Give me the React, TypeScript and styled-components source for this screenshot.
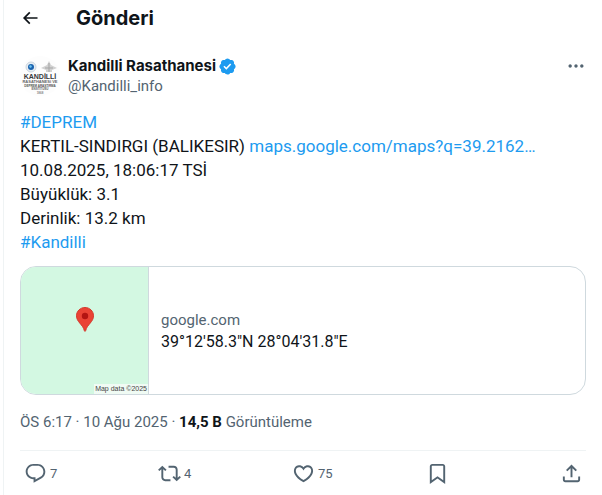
import React from "react";
import styled, { createGlobalStyle } from "styled-components";

const colors = {
  text: "#0f1419",
  muted: "#536471",
  link: "#1d9bf0",
  border: "#cfd9de",
  line: "#eff3f4",
  map: "#d3f8e2",
};

const GlobalStyle = createGlobalStyle`
  *, *::before, *::after { box-sizing: border-box; }
  body {
    margin: 0;
    background: #fff;
    color: ${colors.text};
    font-family: Roboto, "Liberation Sans", sans-serif;
    font-size: 15px;
    line-height: 20px;
  }
  button {
    padding: 0;
    border: 0;
    background: none;
    color: inherit;
    font: inherit;
    cursor: pointer;
  }
  a { color: ${colors.link}; text-decoration: none; }
  svg { display: block; flex: none; fill: currentColor; }
`;

const Column = styled.main`
  min-height: 100vh;
  margin-left: 3px;
  padding: 0 16px;
  border-left: 1px solid ${colors.line};
`;

const Header = styled.header`
  display: flex;
  align-items: center;
  gap: 36px;
  height: 36px;
`;

const Title = styled.h1`
  margin: 0;
  font-family: Inter, sans-serif;
  font-size: 20px;
  font-weight: 700;
  line-height: 24px;
`;

const IconButton = styled.button`
  display: flex;
  color: ${colors.text};
`;

const MoreButton = styled(IconButton)`
  align-self: flex-start;
  margin-left: auto;
  color: ${colors.muted};
`;

const Author = styled.div`
  display: flex;
  align-items: center;
  gap: 8px;
  margin-top: 20px;
`;

const Names = styled.div`
  display: flex;
  flex-direction: column;
`;

const DisplayName = styled.a`
  display: flex;
  align-items: center;
  gap: 2px;
  color: ${colors.text};
  font-family: Inter, sans-serif;
  font-weight: 700;

  svg { color: ${colors.link}; }
`;

const Handle = styled.a`
  color: ${colors.muted};
`;

const Body = styled.div`
  margin-top: 14px;
  font-size: 17px;
  line-height: 24px;

  p { margin: 0; }
`;

const Card = styled.a`
  display: flex;
  margin-top: 12px;
  overflow: hidden;
  border: 1px solid ${colors.border};
  border-radius: 16px;
  color: ${colors.text};
`;

const MapThumb = styled.div`
  display: grid;
  grid-template-rows: 1fr auto;
  flex: none;
  width: 128px;
  height: 127px;
  border-right: 1px solid ${colors.border};
  background: ${colors.map};
`;

const PinArea = styled.div`
  display: flex;
  justify-content: center;
  padding-top: 40px;
`;

const MapCredit = styled.small`
  justify-self: end;
  padding: 0 1px;
  background: #f0fbf4;
  color: #444;
  font-family: "Liberation Sans", sans-serif;
  font-size: 7px;
  line-height: 10px;
`;

const CardText = styled.div`
  display: flex;
  flex-direction: column;
  justify-content: center;
  gap: 2px;
  padding: 0 12px;
`;

const Domain = styled.span`
  color: ${colors.muted};
`;

const Place = styled.span`
  font-size: 16px;
`;

const Meta = styled.div`
  padding: 17px 0 18px;
  border-bottom: 1px solid ${colors.line};
  color: ${colors.muted};

  strong { color: ${colors.text}; }
`;

const Actions = styled.div`
  display: grid;
  grid-template-columns: repeat(4, 1fr) auto;
  padding: 11px 3px 8px 4px;
  color: ${colors.muted};
  font-size: 13px;
`;

const Action = styled.button`
  display: flex;
  align-items: center;
  justify-self: start;
  gap: 3px;
`;

const icons = {
  back: "M7.414 13l5.043 5.04-1.414 1.42L3.586 12l7.457-7.46 1.414 1.42L7.414 11H21v2H7.414z",
  more: "M3 12c0-1.1.9-2 2-2s2 .9 2 2-.9 2-2 2-2-.9-2-2zm9 2c1.1 0 2-.9 2-2s-.9-2-2-2-2 .9-2 2 .9 2 2 2zm7 0c1.1 0 2-.9 2-2s-.9-2-2-2-2 .9-2 2 .9 2 2 2z",
  reply: "M1.751 10c0-4.42 3.584-8 8.005-8h4.366c4.49 0 8.129 3.64 8.129 8.13 0 2.96-1.607 5.68-4.196 7.11l-8.054 4.46v-3.69h-.067c-4.49.1-8.183-3.51-8.183-8.01zm8.005-6c-3.317 0-6.005 2.69-6.005 6 0 3.37 2.77 6.08 6.138 6.01l.351-.01h1.761v2.3l5.087-2.81c1.951-1.08 3.163-3.13 3.163-5.36 0-3.39-2.744-6.13-6.129-6.13H9.756z",
  repost: "M4.5 3.88l4.432 4.14-1.364 1.46L5.5 7.55V16c0 1.1.896 2 2 2H13v2H7.5c-2.209 0-4-1.79-4-4V7.55L1.432 9.48.068 8.02 4.5 3.88zM16.5 6H11V4h5.5c2.209 0 4 1.79 4 4v8.45l2.068-1.93 1.364 1.46-4.432 4.14-4.432-4.14 1.364-1.46 2.068 1.93V8c0-1.1-.896-2-2-2z",
  like: "M16.697 5.5c-1.222-.06-2.679.51-3.89 2.16l-.805 1.09-.806-1.09C9.984 6.01 8.526 5.44 7.304 5.5c-1.243.07-2.349.78-2.91 1.91-.552 1.12-.633 2.78.479 4.82 1.074 1.97 3.257 4.27 7.129 6.61 3.87-2.34 6.052-4.64 7.126-6.61 1.111-2.04 1.03-3.7.477-4.82-.561-1.13-1.666-1.84-2.908-1.91zm4.187 7.69c-1.351 2.48-4.001 5.12-8.379 7.67l-.503.3-.504-.3c-4.379-2.55-7.029-5.19-8.382-7.67-1.36-2.5-1.41-4.86-.514-6.67.887-1.79 2.647-2.91 4.601-3.01 1.651-.09 3.368.56 4.798 2.01 1.429-1.45 3.146-2.1 4.796-2.01 1.954.1 3.714 1.22 4.601 3.01.896 1.81.846 4.17-.514 6.67z",
  bookmark: "M4 4.5C4 3.12 5.119 2 6.5 2h11C18.881 2 20 3.12 20 4.5v18.44l-8-5.71-8 5.71V4.5zM6.5 4c-.276 0-.5.22-.5.5v14.56l6-4.29 6 4.29V4.5c0-.28-.224-.5-.5-.5h-11z",
  share: "M12 2.59l5.7 5.7-1.41 1.42L13 6.41V16h-2V6.41l-3.3 3.3-1.41-1.42L12 2.59zM21 15l-.02 3.51c0 1.38-1.12 2.49-2.5 2.49H5.5C4.11 21 3 19.88 3 18.5V15h2v3.5c0 .28.22.5.5.5h12.98c.28 0 .5-.22.5-.5L19 15h2z",
};

function Icon({ name, size = 23 }: { name: keyof typeof icons; size?: number }) {
  return (
    <svg width={size} height={size} viewBox="0 0 24 24" aria-hidden="true">
      <path d={icons[name]} />
    </svg>
  );
}

function Verified() {
  return (
    <svg width="19" height="19" viewBox="0 0 22 22" role="img" aria-label="Onaylanmış hesap">
      <path d="M20.396 11c-.018-.646-.215-1.275-.57-1.816-.354-.54-.852-.972-1.438-1.246.223-.607.27-1.264.14-1.897-.131-.634-.437-1.218-.882-1.687-.47-.445-1.053-.75-1.687-.882-.633-.13-1.29-.083-1.897.14-.273-.587-.704-1.086-1.245-1.44S11.647 1.62 11 1.604c-.646.017-1.273.213-1.813.568s-.969.854-1.24 1.44c-.608-.223-1.267-.272-1.902-.14-.635.13-1.22.436-1.69.882-.445.47-.749 1.055-.878 1.688-.13.633-.08 1.29.144 1.896-.587.274-1.087.705-1.443 1.245-.356.54-.555 1.17-.574 1.817.02.647.218 1.276.574 1.817.356.54.856.972 1.443 1.245-.224.606-.274 1.263-.144 1.896.13.634.433 1.218.877 1.688.47.443 1.054.747 1.687.878.633.132 1.29.084 1.897-.136.274.586.705 1.084 1.246 1.439.54.354 1.17.551 1.816.569.647-.016 1.276-.213 1.817-.567s.972-.854 1.245-1.44c.604.239 1.266.296 1.903.164.636-.132 1.22-.447 1.68-.907.46-.46.776-1.044.908-1.681s.075-1.299-.165-1.903c.586-.274 1.084-.705 1.439-1.246.354-.54.551-1.17.569-1.816zM9.662 14.85l-3.429-3.428 1.293-1.302 2.072 2.072 4.4-4.794 1.347 1.246z" />
    </svg>
  );
}

function Avatar() {
  return (
    <svg width="40" height="40" viewBox="0 0 40 40" role="img" aria-label="Kandilli Rasathanesi">
      <circle cx="20" cy="20" r="20" fill="#fdfdfd" />
      <circle cx="11" cy="11" r="5" fill="#e6edf3" stroke="#ccd6df" />
      <circle cx="11" cy="11" r="3" fill="#1c63ae" />
      <path d="M9 10l2-1 1 2-2 1z" fill="#6cc4f0" />
      <path d="M29 5l2 4 6 3-5 2h-6l-5-2 6-3z" fill="#d2d2d2" />
      <path d="M29 7v9M25 12h8M26 15h6" stroke="#a5a5a5" fill="none" />
      <g
        fill="#35383b"
        textAnchor="middle"
        fontFamily="Liberation Sans, sans-serif"
        fontWeight="700"
      >
        <text x="20" y="23" fontSize="7">KANDİLLİ</text>
        <text x="20" y="27" fontSize="4" fill="#666">RASATHANESİ VE</text>
        <text x="20" y="31" fontSize="3" fill="#555">DEPREM ARAŞTIRMA</text>
        <text x="20" y="34" fontSize="3" fill="#666">ENSTİTÜSÜ</text>
        <text x="20" y="38" fontSize="3" fill="#888">1868</text>
      </g>
    </svg>
  );
}

function Pin() {
  return (
    <svg width="18" height="25" viewBox="0 0 18 25" aria-hidden="true">
      <path
        d="M9 .5C4.2.5.5 4.2.5 8.8c0 3 1.4 5 3.2 7.2C6 18.8 7.700 20.600 8.300 23.600c.2 1 1.200 1 1.400 0 .6-3 2.300-4.800 4.600-7.600 1.800-2.200 3.200-4.200 3.200-7.200C17.500 4.200 13.800.5 9 .5z"
        fill="#ea4335"
        stroke="#d33b2e"
      />
      <circle cx="9" cy="9" r="3.2" fill="#b31412" />
    </svg>
  );
}

const actions: { icon: keyof typeof icons; label: string; count?: number }[] = [
  { icon: "reply", label: "Yanıtla", count: 7 },
  { icon: "repost", label: "Yeniden gönder", count: 4 },
  { icon: "like", label: "Beğen", count: 75 },
  { icon: "bookmark", label: "Yer işareti" },
  { icon: "share", label: "Paylaş" },
];

export default function App() {
  return (
    <>
      <GlobalStyle />
      <Column>
        <Header>
          <IconButton aria-label="Geri">
            <Icon name="back" size={20} />
          </IconButton>
          <Title>Gönderi</Title>
        </Header>
        <article>
          <Author>
            <Avatar />
            <Names>
              <DisplayName href="#profile">
                Kandilli Rasathanesi
                <Verified />
              </DisplayName>
              <Handle href="#profile">@Kandilli_info</Handle>
            </Names>
            <MoreButton aria-label="Daha fazla">
              <Icon name="more" size={20} />
            </MoreButton>
          </Author>
          <Body>
            <p><a href="#deprem">#DEPREM</a></p>
            <p>
              KERTIL-SINDIRGI (BALIKESIR){" "}
              <a href="#map">maps.google.com/maps?q=39.2162…</a>
            </p>
            <p>10.08.2025, 18:06:17 TSİ</p>
            <p>Büyüklük: 3.1</p>
            <p>Derinlik: 13.2 km</p>
            <p><a href="#kandilli">#Kandilli</a></p>
          </Body>
          <Card href="#map">
            <MapThumb>
              <PinArea><Pin /></PinArea>
              <MapCredit>Map data ©2025</MapCredit>
            </MapThumb>
            <CardText>
              <Domain>google.com</Domain>
              <Place>39°12'58.3"N 28°04'31.8"E</Place>
            </CardText>
          </Card>
          <Meta>
            ÖS 6:17 · 10 Ağu 2025 · <strong>14,5 B</strong> Görüntüleme
          </Meta>
          <Actions>
            {actions.map(({ icon, label, count }) => (
              <Action key={icon} aria-label={label}>
                <Icon name={icon} />
                {count}
              </Action>
            ))}
          </Actions>
        </article>
      </Column>
    </>
  );
}
